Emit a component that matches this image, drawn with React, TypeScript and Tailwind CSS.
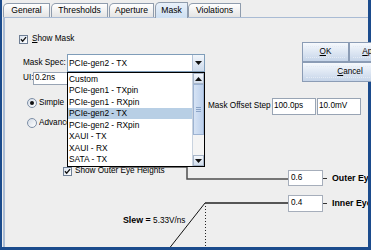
import React from 'react';

const specs = [
  'Custom',
  'PCIe-gen1 - TXpin',
  'PCIe-gen1 - RXpin',
  'PCIe-gen2 - TX',
  'PCIe-gen2 - RXpin',
  'XAUI - TX',
  'XAUI - RX',
  'SATA - TX',
];

const tabs = [
  { label: 'General', cls: 'w-[47px]' },
  { label: 'Thresholds', cls: 'ml-[1px] w-[57px]' },
  { label: 'Aperture', cls: 'ml-[1px] w-[45px]' },
  { label: 'Mask', cls: 'ml-[1px] w-[33px]', active: true },
  { label: 'Violations', cls: 'w-[53px]' },
];

function Check() {
  return (
    <span className="flex h-[9px] w-[9px] shrink-0 items-center justify-center border border-[#6f7f95] bg-gradient-to-br from-[#dbe3ee] to-white">
      <svg viewBox="0 0 9 9" className="h-[7px] w-[7px]">
        <path d="M1.2 4.2 L3.4 6.6 L7.8 1.4" fill="none" stroke="#111" strokeWidth="1.7" />
      </svg>
    </span>
  );
}

function Radio({ on = false }: { on?: boolean }) {
  return (
    <span className="flex h-[10px] w-[10px] shrink-0 items-center justify-center rounded-full border border-[#7d8ea6] bg-gradient-to-br from-[#d3dbe6] to-white">
      {on && <span className="h-[4px] w-[4px] rounded-full bg-[#111]" />}
    </span>
  );
}

function Arrow({ up = false }: { up?: boolean }) {
  return (
    <svg viewBox="0 0 7 4" className="h-[4px] w-[7px]">
      <path d={up ? 'M0 4 L3.5 0 L7 4 Z' : 'M0 0 L7 0 L3.5 4 Z'} fill="#111" />
    </svg>
  );
}

function Button({ children, className = '' }: { children: React.ReactNode; className?: string }) {
  return (
    <div className={`relative flex h-[20px] shrink-0 items-center justify-center border border-[#8b9cb5] bg-gradient-to-b from-[#f6f9fd] to-[#c6d5e9] ${className}`}>
      <div className="absolute inset-x-[3px] inset-y-[3px] border-y border-dotted border-[#e4ebf5]" />
      <span className="relative">{children}</span>
    </div>
  );
}

export default function App() {
  return (
    <div className="relative h-[250px] w-[371px] overflow-hidden bg-[#eeeeee] font-['Liberation_Sans',Arial,sans-serif] text-[8.2px] leading-none text-black">
      <div className="flex h-[247px]">
        <div className="w-[2px] shrink-0 bg-[#1b4b8c]" />

        <div className="flex w-[366px] shrink-0 flex-col">
          {/* tab strip */}
          <div className="flex h-[17px] items-end pl-[1px]">
            {tabs.map((t) => (
              <div
                key={t.label}
                className={`flex shrink-0 items-center justify-center rounded-tl-[5px] rounded-tr-[1px] border border-b-0 border-[#8f9cad] text-[8.6px] ${t.cls} ${
                  t.active
                    ? 'relative z-10 -mb-[1px] h-[16px] bg-gradient-to-b from-[#e9f1fa] to-[#cddff2]'
                    : 'h-[14px] bg-gradient-to-b from-white to-[#e4e4e4]'
                }`}
              >
                {t.label}
              </div>
            ))}
          </div>

          {/* Mask panel */}
          <div className="ml-[1px] flex flex-1 border-t border-l-2 border-[#a9bbd4]">
            <div className="flex w-[200px] shrink-0 flex-col">
              <div className="mt-[16px] flex h-[10px] items-center pl-[14px]">
                <Check />
                <span className="ml-[4px]">
                  <span className="underline underline-offset-1">S</span>how Mask
                </span>
              </div>

              <div className="mt-[10px] flex h-[18px] items-center pl-[18px]">
                <span className="w-[44px] shrink-0">Mask Spec:</span>
                <div className="flex h-[18px] w-[138px] shrink-0 border border-[#7f9db9] bg-white">
                  <span className="flex flex-1 items-center pl-[1px] text-[8.4px]">PCIe-gen2 - TX</span>
                  <span className="flex w-[12px] items-center justify-center border-l border-[#b4c3d8] bg-gradient-to-b from-[#f2f6fb] to-[#cddaeb]">
                    <Arrow />
                  </span>
                </div>
              </div>

              <div className="flex h-[13px] items-center pl-[18px]">
                <span className="w-[10px] shrink-0">UI:</span>
                <span className="flex h-[13px] w-[34px] items-center overflow-hidden border border-r-0 border-[#98a4b4] bg-white pl-[1px]">0.2ns</span>
              </div>

              <div className="mt-[13px] flex h-[10px] items-center pl-[22px]">
                <Radio on />
                <span className="ml-[2px] w-[28px] overflow-hidden whitespace-nowrap">Simple</span>
              </div>

              <div className="mt-[10px] flex h-[10px] items-center pl-[22px]">
                <Radio />
                <span className="ml-[2px] w-[28px] overflow-hidden whitespace-nowrap">Advanced</span>
              </div>

              <div className="mt-[38px] flex h-[10px] items-center pl-[58px]">
                <Check />
                <span className="ml-[3px] whitespace-nowrap">Show Outer Eye Heights</span>
              </div>
            </div>

            <div className="flex min-w-0 flex-1 flex-col">
              <div className="mt-[24px] flex pl-[97px]">
                <Button className="w-[47px]">
                  <span className="underline underline-offset-1">O</span>K
                </Button>
                <Button className="w-[47px]">
                  <span className="underline underline-offset-1">A</span>pply
                </Button>
              </div>
              <div className="flex pl-[97px]">
                <Button className="w-[96px]">
                  <span className="underline underline-offset-1">C</span>ancel
                </Button>
              </div>

              <div className="mt-[16px] flex h-[17px] items-center pl-[3px]">
                <span className="w-[63px] shrink-0 whitespace-nowrap">Mask Offset Step</span>
                <span className="ml-[1px] flex h-[17px] w-[44px] shrink-0 items-center border border-[#98a4b4] bg-white pl-[1px]">100.0ps</span>
                <span className="ml-[1px] flex h-[17px] w-[44px] shrink-0 items-center border border-[#98a4b4] bg-white pl-[1px]">10.0mV</span>
              </div>
            </div>
          </div>
        </div>

        <div className="w-[3px] shrink-0 bg-[#1b4b8c]" />
      </div>
      <div className="h-[3px] bg-[#1b4b8c]" />

      {/* eye mask drawing */}
      <div className="pointer-events-none absolute left-0 top-0 h-[247px] w-[368px] overflow-hidden">
        <svg className="absolute left-0 top-0" width="368" height="247">
          <polyline points="110,167 187,167 187,179 288,179" fill="none" stroke="#4d4d4d" strokeWidth="1.5" />
          <line x1="205" y1="203" x2="288" y2="203" stroke="#555" strokeWidth="2" />
          <line x1="205" y1="203" x2="168" y2="250" stroke="#111" strokeWidth="1" />
          <line x1="205.5" y1="206" x2="205.5" y2="247" stroke="#222" strokeWidth="1" strokeDasharray="1 2" />
          <line x1="323" y1="178.5" x2="327" y2="178.5" stroke="#333" strokeWidth="1" />
          <line x1="323" y1="203.5" x2="327" y2="203.5" stroke="#333" strokeWidth="1" />
        </svg>
        <span className="absolute left-[288px] top-[170px] flex h-[16px] w-[35px] items-center border border-[#a6aebb] bg-white pl-[2px]">0.6</span>
        <span className="absolute left-[332px] top-[174px] whitespace-nowrap text-[8.8px] font-bold">Outer Eye</span>
        <span className="absolute left-[288px] top-[195px] flex h-[17px] w-[35px] items-center border border-[#a6aebb] bg-white pl-[2px]">0.4</span>
        <span className="absolute left-[332px] top-[199px] whitespace-nowrap text-[8.8px] font-bold">Inner Eye</span>
        <span className="absolute left-[123px] top-[216px] whitespace-nowrap">
          <span className="text-[8.8px] font-bold">Slew = </span>5.33V/ns
        </span>
      </div>

      {/* open combo popup */}
      <div className="absolute left-[67px] top-[72px] flex h-[95px] w-[138px] border border-black bg-white">
        <div className="flex w-[124px] flex-col">
          {specs.map((s, i) => (
            <div key={s} className={`flex h-[11.5px] items-center pl-[1px] text-[8.4px] ${i === 3 ? 'bg-[#b8cfe5]' : ''}`}>
              {s}
            </div>
          ))}
        </div>
        <div className="flex w-[12px] flex-col border-l border-[#c9d3df]">
          <div className="flex h-[11px] items-center justify-center border border-[#a8b6c9] bg-gradient-to-b from-[#f4f7fb] to-[#d3deed]">
            <Arrow up />
          </div>
          <div className="flex h-[51px] items-center justify-center border border-[#9db3d2] bg-gradient-to-r from-[#d6e3f4] to-[#bcd0ec]">
            <div className="flex flex-col gap-[1px]">
              <span className="h-[1px] w-[5px] bg-[#8aa3c6]" />
              <span className="h-[1px] w-[5px] bg-[#8aa3c6]" />
              <span className="h-[1px] w-[5px] bg-[#8aa3c6]" />
            </div>
          </div>
          <div className="flex-1 bg-[#f4f4f4]" />
          <div className="flex h-[11px] items-center justify-center border border-[#a8b6c9] bg-gradient-to-b from-[#f4f7fb] to-[#d3deed]">
            <Arrow />
          </div>
        </div>
      </div>
    </div>
  );
}
